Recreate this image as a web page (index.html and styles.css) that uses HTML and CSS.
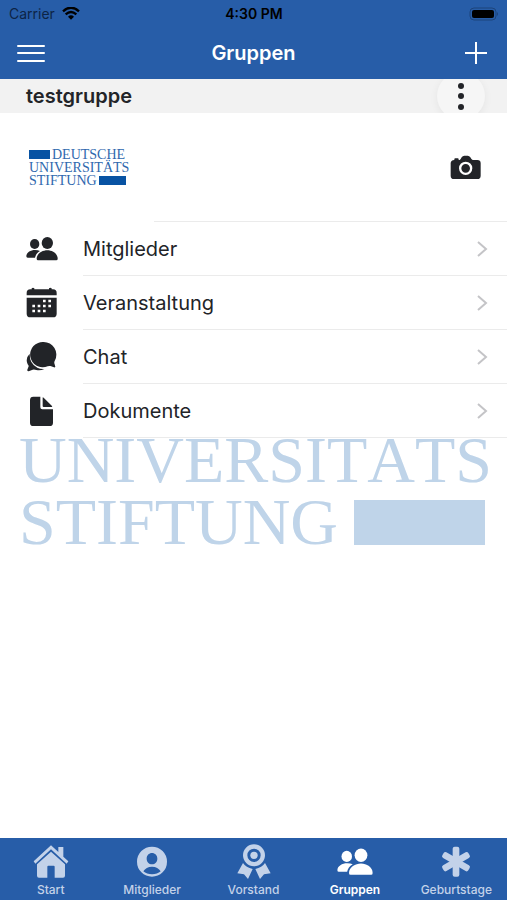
FILE: index.html
```html
<!DOCTYPE html>
<html lang="de">

<head>
    <meta charset="UTF-8">
    <meta name="viewport" content="width=device-width, initial-scale=1">
    <title>Gruppen</title>
    <link rel="stylesheet" href="styles.css">
</head>

<body>
    <!-- icons used more than once -->
    <svg class="sprite" width="0" height="0">
        <symbol id="people" viewBox="0 0 96 72">
            <ellipse cx="26" cy="21" rx="14" ry="15" />
            <ellipse cx="64" cy="18" rx="17" ry="18" />
            <path d="M32 65C32 50 49 40 64 40S95 50 95 65Q95 70 91 70H36Q32 70 32 65Z" />
            <path d="M1 58C1 46 14 39 27 39Q36 39 42 42C33 47 29 54 27 62H5Q1 62 1 58Z" />
        </symbol>
        <symbol id="chevron" viewBox="0 0 12 18">
            <path d="M2 2l8 7-8 7" fill="none" stroke="#c4c4c7" stroke-width="2" />
        </symbol>
    </svg>

    <header class="header">
        <div class="status">
            <span class="carrier">Carrier
                <svg width="18" height="13" viewBox="0 0 54 39">
                    <path d="M3 13Q27-9 51 13M11 22Q27 8 43 22" fill="none" stroke="#000" stroke-width="7" />
                    <path d="M18 29Q27 21 36 29L27 38Z" />
                </svg>
            </span>
            <span class="time">4:30 PM</span>
            <svg class="battery" width="30" height="14" viewBox="0 0 30 14">
                <rect x="1" y="1" width="26" height="12" rx="4" fill="none" stroke="#1d447b" />
                <rect x="3" y="3" width="22" height="8" rx="2" />
                <path d="M28 5q2 2 0 4z" fill="#1d447b" />
            </svg>
        </div>
        <div class="toolbar">
            <button type="button" class="tool" aria-label="Menü">
                <svg width="30" height="22" viewBox="0 0 30 22">
                    <path d="M2 4h26M2 11h26M2 19h26" stroke="#fff" stroke-width="2" stroke-linecap="round" />
                </svg>
            </button>
            <h1>Gruppen</h1>
            <button type="button" class="tool" aria-label="Neue Gruppe">
                <svg width="22" height="22" viewBox="0 0 22 22">
                    <path d="M11 0v22M0 11h22" stroke="#fff" stroke-width="2" />
                </svg>
            </button>
        </div>
    </header>

    <main class="content">
        <div class="group-bar">
            <h2>testgruppe</h2>
            <button type="button" class="more" aria-label="Mehr">
                <svg width="8" height="28" viewBox="0 0 8 28">
                    <circle cx="4" cy="4" r="3" />
                    <circle cx="4" cy="14" r="3" />
                    <circle cx="4" cy="25" r="3" />
                </svg>
            </button>
        </div>

        <div class="group-logo">
            <div class="logo">
                <span><i class="bar"></i>DEUTSCHE</span>
                <span>UNIVERSITÄTS</span>
                <span>STIFTUNG<i class="bar bar-end"></i></span>
            </div>
            <button type="button" class="camera" aria-label="Foto ändern">
                <svg width="32" height="26" viewBox="0 0 96 78">
                    <path fill-rule="evenodd" d="M13 15V12Q13 10 16 10H23Q26 10 26 13V15H29Q32 14 35 7Q38 2 43 2H53Q58 2 61 7Q64 14 68 15H82Q92 15 92 25V62Q92 72 82 72H12Q2 72 2 62V25Q2 16 13 15ZM47 20A20 20 0 1 0 47 60A20 20 0 1 0 47 20ZM47 27A13 13 0 1 1 47 53A13 13 0 1 1 47 27Z" />
                </svg>
            </button>
        </div>

        <nav class="list">
            <a href="#mitglieder">
                <svg class="icon" width="32" height="24"><use href="#people" /></svg>
                <span>Mitglieder<svg width="12" height="18"><use href="#chevron" /></svg></span>
            </a>
            <a href="#veranstaltung">
                <svg class="icon" width="32" height="32" viewBox="0 0 96 96">
                    <path d="M2 25V18Q2 7 13 7H17V4Q21 0 25 4V7H69V4Q73 0 77 4V7H81Q92 7 92 18V25Z" />
                    <path fill-rule="evenodd" d="M2 32H92V80Q92 91 81 91H13Q2 91 2 80ZM51 38V46H59V38ZM67 38V46H75V38ZM19 53V61H27V53ZM35 53V61H43V53ZM51 53V61H59V53ZM67 53V61H75V53ZM19 68V76H27V68ZM35 68V76H43V68ZM51 68V76H59V68Z" />
                </svg>
                <span>Veranstaltung<svg width="12" height="18"><use href="#chevron" /></svg></span>
            </a>
            <a href="#chat">
                <svg class="icon" width="32" height="32" viewBox="0 0 96 96">
                    <path d="M53 3A38 38 0 0 1 87 58Q84 63 85 67L88 77Q87 80 84 79L73 75Q69 74 65 76A38 38 0 1 1 53 3Z" />
                    <path d="M11 38Q10 68 34 80Q43 85 55 84Q43 90 31 87Q24 84 20 86L8 91Q3 91 4 86L8 76Q8 73 5 70Q-3 52 11 38Z" />
                </svg>
                <span>Chat<svg width="12" height="18"><use href="#chevron" /></svg></span>
            </a>
            <a href="#dokumente">
                <svg class="icon" width="32" height="32" viewBox="0 0 96 96">
                    <path d="M22 5H43V37Q43 43 49 43H81V83Q81 93 71 93H22Q12 93 12 83V15Q12 5 22 5Z" />
                    <path d="M50 8Q50 5 53 8L78 33Q80 36 77 36H53Q50 36 50 33Z" />
                </svg>
                <span>Dokumente<svg width="12" height="18"><use href="#chevron" /></svg></span>
            </a>
        </nav>

        <!-- watermark, runs out from under the list -->
        <div class="watermark">
            <span>UNIVERSITÄTS</span>
            <span>STIFTUNG<i class="bar"></i></span>
        </div>
    </main>

    <nav class="tabs">
        <a href="#start">
            <svg width="36" height="36" viewBox="0 0 108 108">
                <path d="M54 4L76 24V9H91V38L106 52L101 59L54 16L7 59L2 52Z" />
                <path d="M54 23L96 61V95Q96 101 90 101H65V68Q65 65 62 65H46Q43 65 43 68V101H18Q12 101 12 95V61Z" />
            </svg>
            Start
        </a>
        <a href="#alle">
            <svg width="36" height="36" viewBox="0 0 108 108">
                <path fill-rule="evenodd" d="M54 8A45 45 0 1 0 54 98A45 45 0 1 0 54 8ZM54 27C63 27 70 34 70 44S63 61 54 61S38 54 38 44S45 27 54 27ZM28 82Q36 68 54 68T80 82Q70 91 54 91T28 82Z" />
            </svg>
            Mitglieder
        </a>
        <a href="#vorstand">
            <svg width="36" height="36" viewBox="0 0 108 108">
                <path fill-rule="evenodd" d="M54 1A33 33 0 1 0 54 67A33 33 0 1 0 54 1ZM54 14A20 20 0 1 1 54 54A20 20 0 1 1 54 14Z" />
                <circle cx="54" cy="34" r="11" />
                <path d="M21 57Q30 71 50 75L36 105L24 91L4 88ZM87 57Q78 71 58 75L72 105L84 91L104 88Z" />
            </svg>
            Vorstand
        </a>
        <a href="#gruppen" class="active">
            <svg width="36" height="36"><use href="#people" /></svg>
            Gruppen
        </a>
        <a href="#geburtstage">
            <svg width="36" height="36" viewBox="0 0 108 108">
                <rect x="44" y="8" width="20" height="90" rx="6" />
                <rect x="44" y="8" width="20" height="90" rx="6" transform="rotate(60 54 53)" />
                <rect x="44" y="8" width="20" height="90" rx="6" transform="rotate(-60 54 53)" />
            </svg>
            Geburtstage
        </a>
    </nav>
</body>

</html>
```
FILE: styles.css
```css
* {
    margin: 0;
    padding: 0;
    box-sizing: border-box;
}

html,
body {
    height: 100%;
}

body {
    display: flex;
    flex-direction: column;
    background: #fff;
    color: #222428;
    font-family: Inter, "Liberation Sans", sans-serif;
}

a {
    text-decoration: none;
    color: inherit;
}

button {
    border: 0;
    background: none;
    color: inherit;
}

svg {
    display: block;
    flex: none;
    fill: currentColor;
}

.sprite {
    position: absolute;
}

/* header */
.header {
    background: #275da8;
}

.status {
    display: grid;
    grid-template-columns: 1fr auto 1fr;
    align-items: center;
    height: 27px;
    padding: 0 8px 0 9px;
    font-size: 14px;
    color: #000;
}

.carrier {
    display: flex;
    align-items: center;
    gap: 7px;
    color: #0d2446;
}

.carrier svg {
    fill: #000;
}

.time {
    font-weight: 600;
}

.battery {
    justify-self: end;
}

.toolbar {
    display: flex;
    align-items: center;
    justify-content: space-between;
    height: 52px;
    padding: 0 16px;
    color: #fff;
}

.tool {
    display: flex;
    align-items: center;
    justify-content: center;
    width: 30px;
    height: 44px;
}

.toolbar h1 {
    font-size: 20px;
    font-weight: 600;
}

/* content */
.content {
    flex: 1;
    position: relative;
    z-index: 0;
    overflow: hidden;
}

.group-bar {
    display: flex;
    align-items: center;
    justify-content: space-between;
    height: 34px;
    padding: 0 22px 0 26px;
    background: #f2f2f2;
    overflow: hidden;
}

.group-bar h2 {
    font-size: 20px;
    font-weight: 600;
}

.more {
    display: flex;
    flex: none;
    align-items: center;
    justify-content: center;
    width: 48px;
    height: 48px;
    border-radius: 50%;
    background: #f6f6f6;
    box-shadow: 0 2px 8px rgba(0, 0, 0, .06);
}

.group-logo {
    display: flex;
    align-items: center;
    justify-content: space-between;
    height: 109px;
    padding: 0 25px 0 29px;
    background: linear-gradient(#ebebeb, #ebebeb) no-repeat 154px 100% / 100% 1px #fff;
}

.logo {
    font-family: "Liberation Serif", serif;
    font-size: 14px;
    line-height: 13px;
    color: #2f68ae;
}

.logo span {
    display: flex;
    align-items: center;
    gap: 2px;
}

.logo .bar {
    width: 21px;
    height: 9px;
    background: #0853a3;
}

.logo .bar-end {
    width: 27px;
}

.list a {
    display: flex;
    align-items: center;
    height: 54px;
    padding-left: 26px;
    background: #fff;
    font-size: 20px;
}

.icon {
    margin-right: 25px;
}

.list span {
    display: flex;
    flex: 1;
    align-items: center;
    justify-content: space-between;
    height: 100%;
    padding-right: 19px;
    border-bottom: 1px solid #ebebeb;
}

.watermark {
    position: absolute;
    z-index: -1;
    top: 350px;
    left: 19px;
    font-family: "Liberation Serif", serif;
    font-size: 66px;
    line-height: 62px;
    color: #bfd4e9;
}

.watermark span {
    display: flex;
    align-items: center;
    gap: 16px;
}

.watermark .bar {
    width: 131px;
    height: 45px;
    background: #bfd4e9;
}

/* tab bar */
.tabs {
    display: flex;
    height: 62px;
    padding-top: 6px;
    background: #275da8;
    color: #c3d2e9;
}

.tabs a {
    display: flex;
    flex: 1 1 0;
    flex-direction: column;
    align-items: center;
    font-size: 12px;
    font-weight: 500;
    line-height: 20px;
}

.tabs .active {
    color: #fff;
    font-weight: 600;
}
```
